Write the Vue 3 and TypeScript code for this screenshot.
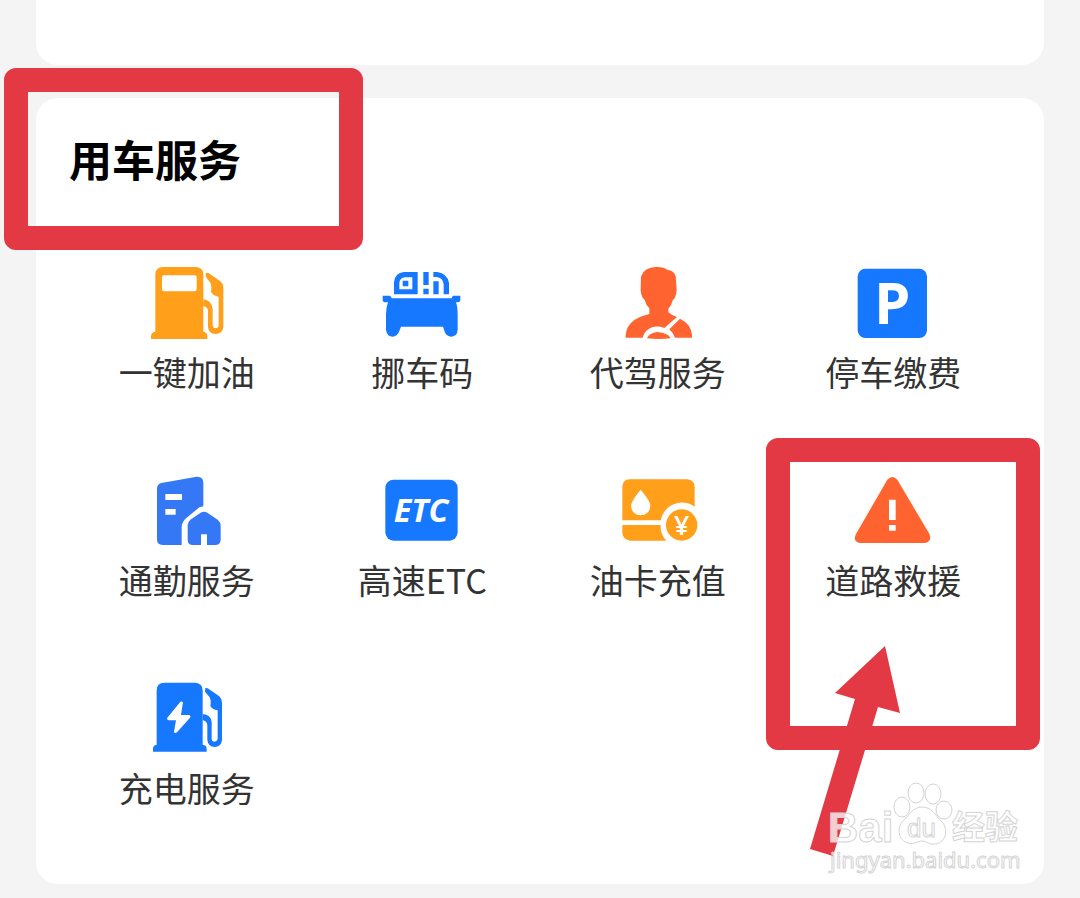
<script setup lang="ts">
type IconName = 'fuel' | 'car' | 'driver' | 'parking' | 'commute' | 'etc' | 'card' | 'rescue' | 'charge'

interface Service {
  icon: IconName
  label: string
  view: string
  marked?: boolean
}

const services: Service[] = [
  { icon: 'fuel', label: '一键加油', view: '87 9 288 270' },
  { icon: 'car', label: '挪车码', view: '72 9 288 270' },
  { icon: 'driver', label: '代驾服务', view: '89 9 288 270' },
  { icon: 'parking', label: '停车缴费', view: '90 9 288 270' },
  { icon: 'commute', label: '通勤服务', view: '87 3 288 270' },
  { icon: 'etc', label: '高速ETC', view: '72 3 288 270' },
  { icon: 'card', label: '油卡充值', view: '89 3 288 270' },
  { icon: 'rescue', label: '道路救援', view: '90 3 288 270', marked: true },
  { icon: 'charge', label: '充电服务', view: '87 12 288 270' },
]
</script>

<template>
  <main class="page">
    <section class="card card-top"></section>
    <section class="card card-services">
      <header class="head">
        <h2 class="title">用车服务</h2>
        <span class="frame frame-title"></span>
      </header>
      <div class="grid">
        <button v-for="s in services" :key="s.label" type="button" class="item">
          <svg class="icon" :viewBox="s.view" aria-hidden="true">
            <g v-if="s.icon === 'fuel'" fill="#ff9f1a">
              <path fill-rule="evenodd" d="M136 60Q136 36 160 36H256Q280 36 280 60V230Q292 232 292 244V252H123V244Q123 232 136 230ZM162 61Q156 61 156 67V103Q156 109 162 109H254Q260 109 260 103V67Q260 61 254 61Z" />
              <path d="M287 55L294 53L330 78Q340 86 340 98V216Q338 236 317 237Q295 236 294 216V168Q294 156 280 154V133Q305 137 308 162V211Q309 220 317 220Q326 219 326 211V125Q308 122 303 110Q306 92 300 82L288 66Z" />
            </g>
            <g v-else-if="s.icon === 'car'" fill="#1677ff">
              <path fill-rule="evenodd" d="M132 118V82Q134 54 162 51H203V118ZM148 103H187V67H165Q149 69 148 84Z" />
              <path d="M158 77H175V94H158ZM220 51H236V90H220ZM220 101H236V118H220ZM250 51H262Q292 55 297 84V118H281V87Q278 68 260 66H250ZM250 79H266V118H250Z" />
              <path d="M98 122H119Q123 122 125 130H305Q306 122 311 122H331V136Q331 142 323 142H318Q323 156 323 180V224Q322 243 304 245Q289 244 284 230L279 215H153L148 228Q143 244 127 245Q109 242 108 224V180Q108 157 114 142H107Q98 142 98 134Z" />
            </g>
            <g v-else-if="s.icon === 'driver'" fill="#ff6430">
              <path d="M182 64Q192 37 226 36Q250 35 262 45Q280 46 286 63L289 105Q287 129 277 136Q274 151 264 161V172Q275 182 290 186L252 219Q234 212 217 216Q193 224 187 248H136V239Q138 213 162 195Q180 183 207 177V160Q197 151 193 135Q182 127 181 105Z" />
              <path d="M299 191Q332 207 335 240V248H284Q280 235 267 223ZM200 250Q207 233 231 231Q263 233 271 250Q235 254 200 250Z" />
            </g>
            <g v-else-if="s.icon === 'parking'">
              <rect x="128" y="41" width="208" height="208" rx="23" fill="#1677ff" />
              <text class="glyph glyph-p" x="177" y="207">P</text>
            </g>
            <g v-else-if="s.icon === 'commute'" fill="#3478f6">
              <path fill-rule="evenodd" d="M141 71Q141 58 154 54L260 35Q280 34 280 53V124L268 127L230 158Q215 170 215 187V240H158Q141 240 141 223ZM166 87V105H216V87ZM166 132V149H197V132Z" />
              <path d="M233 181Q233 171 241 164L272 143Q282 137 292 143L324 165Q332 172 332 183V224Q331 240 315 240H291V208H273V240H249Q233 240 233 224Z" />
            </g>
            <g v-else-if="s.icon === 'etc'">
              <rect x="106" y="44" width="217" height="183" rx="25" fill="#1677ff" />
              <text class="glyph glyph-etc" x="213" y="170" text-anchor="middle">ETC</text>
            </g>
            <g v-else-if="s.icon === 'card'">
              <path fill="#ff9f1a" d="M126 166V65Q127 44 148 43H321Q342 45 343 66V125Q320 109 293 114Q252 122 241 166ZM126 180H241Q239 207 258 227H150Q128 225 126 205Z" />
              <path fill="#fff" d="M181 74Q207 104 210 120Q210 149 181 151Q153 149 152 120Q156 103 181 74Z" />
              <circle cx="304" cy="180" r="47" fill="#ff9f1a" />
              <text class="glyph glyph-yuan" x="304" y="209" text-anchor="middle">¥</text>
            </g>
            <g v-else-if="s.icon === 'rescue'">
              <path fill="#ff6430" d="M217 44Q232 28 247 44L342 205Q353 227 331 234H135Q112 229 123 207Z" />
              <path fill="#fff" d="M222 104H242V165H222ZM222 180H242V197H222Z" />
            </g>
            <g v-else>
              <path fill="#1677ff" d="M140 61Q140 38 163 38H256Q278 39 278 62V224Q290 225 290 237V245H129V236Q129 225 140 224Z" />
              <path fill="#1677ff" d="M286 54L293 55L328 79Q336 87 336 98V210Q334 230 314 231Q294 230 292 210V165Q291 153 278 151V132Q302 134 305 156V207Q306 215 314 215Q322 214 323 207V121Q306 118 301 108Q304 91 299 82L285 65Z" />
              <path fill="#fff" d="M211 95Q221 93 218 103L213 135H238Q244 138 240 143L201 187Q193 192 192 185L198 151H175Q169 148 172 143Z" />
            </g>
          </svg>
          <span class="label">{{ s.label }}</span>
          <span v-if="s.marked" class="frame frame-item"></span>
        </button>
      </div>
      <svg class="overlay" viewBox="0 0 290 268" aria-hidden="true">
        <path fill="#e33945" d="M95 16L110 83L88 77L43 226L20 219L65 69L45 63Z" />
        <g class="mark">
          <text class="mark-latin" x="38" y="212">Bai</text>
          <ellipse cx="112" cy="177" rx="8" ry="10" />
          <ellipse cx="126" cy="163" rx="8" ry="10" />
          <ellipse cx="143" cy="164" rx="8" ry="10" />
          <ellipse cx="154" cy="180" rx="8" ry="9" />
          <path d="M132 177C142 177 146 186 152 192C158 198 157 213 145 214C139 215 137 211 132 211C127 211 124 215 118 213C108 210 107 199 112 192C119 186 122 177 132 177Z" />
          <text class="mark-du" x="117" y="207">du</text>
          <text class="mark-cjk" x="162" y="209">经验</text>
          <text class="mark-url" x="40" y="238">jingyan.baidu.com</text>
        </g>
      </svg>
    </section>
  </main>
</template>

<style>
body {
  margin: 0;
  background: #f4f4f4;
}
</style>

<style scoped>
.page {
  box-sizing: border-box;
  min-height: 100vh;
  padding: 0 36px 14px;
  display: flex;
  flex-direction: column;
  gap: 33px;
  background: #f4f4f4;
  font-family: "Noto Sans CJK SC", sans-serif;
  overflow: hidden;
}
.card {
  background: #fff;
  border-radius: 22px;
}
.card-top {
  height: 65px;
  border-radius: 0 0 22px 22px;
}
.card-services {
  position: relative;
  flex: 1;
  padding: 0 33px 70px;
}
.head {
  box-sizing: border-box;
  position: relative;
  padding-top: 32px;
  height: 160px;
}
.title {
  margin: 0;
  font-size: 43px;
  line-height: 56px;
  font-weight: 700;
  color: #000;
}
.grid {
  display: grid;
  grid-template-columns: repeat(4, 1fr);
  row-gap: 68px;
}
.item {
  position: relative;
  display: flex;
  flex-direction: column;
  align-items: center;
  height: 140px;
  padding: 0;
  border: 0;
  background: none;
  font-family: inherit;
  color: #333;
  cursor: pointer;
}
.icon {
  width: 96px;
  height: 90px;
}
.glyph {
  fill: #fff;
  font-family: "Open Sans", "Noto Sans", sans-serif;
  font-weight: 700;
}
.glyph-p {
  font-size: 174px;
}
.glyph-etc {
  font-size: 97px;
  font-style: italic;
}
.glyph-yuan {
  font-size: 80px;
  font-weight: 600;
}
.label {
  font-size: 34px;
  line-height: 48px;
  white-space: nowrap;
}
.frame {
  position: absolute;
  box-sizing: border-box;
  border: 24px solid #e33945;
  border-radius: 12px;
  pointer-events: none;
}
.frame-title {
  left: -65px;
  top: -30px;
  width: 359px;
  height: 182px;
}
.frame-item {
  left: -10px;
  right: -29px;
  top: -28px;
  height: 312px;
}
.overlay {
  position: absolute;
  right: -36px;
  bottom: -14px;
  width: 290px;
  height: 268px;
  pointer-events: none;
}
.mark {
  fill: rgba(255, 255, 255, 0.75);
  stroke: #d4d4d4;
  stroke-width: 1px;
}
.mark-latin {
  font: 700 42px "Liberation Sans", sans-serif;
}
.mark-du {
  font: 400 26px "Liberation Sans", sans-serif;
}
.mark-cjk {
  font: 700 33px "Noto Sans CJK SC", sans-serif;
}
.mark-url {
  font: 400 22px "Noto Sans", sans-serif;
}
</style>
